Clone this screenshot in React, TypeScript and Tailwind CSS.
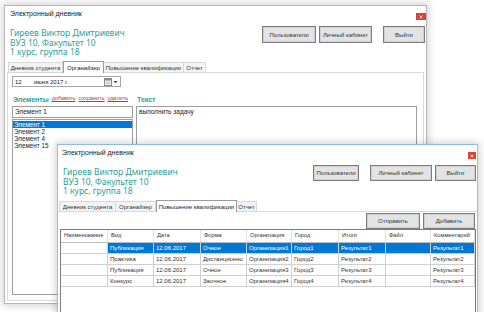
import React from 'react'

type Tab = { label: string; w: string; active?: boolean }

const names = ['Гиреев Виктор Дмитриевич', 'ВУЗ 10, Факультет 10', '1 курс, группа 18']

const cols = [
  { title: 'Наименование', w: 'w-[47px]' },
  { title: 'Вид', w: 'w-[46px]' },
  { title: 'Дата', w: 'w-[47px]' },
  { title: 'Форма', w: 'w-[46px]' },
  { title: 'Организация', w: 'w-[45px]' },
  { title: 'Город', w: 'w-[47px]' },
  { title: 'Итоги', w: 'w-[47px]' },
  { title: 'Файл', w: 'w-[45px]' },
  { title: 'Комментарий', w: 'w-[44px]' },
]

const rows = [
  ['', 'Публикация', '12.06.2017', 'Очное', 'Организация1', 'Город1', 'Результат1', '', 'Результат1'],
  ['', 'Практика', '12.06.2017', 'Дистанционно', 'Организация2', 'Город2', 'Результат2', '', 'Результат2'],
  ['', 'Публикация', '12.06.2017', 'Очное', 'Организация3', 'Город3', 'Результат3', '', 'Результат3'],
  ['', 'Конкурс', '12.06.2017', 'Заочное', 'Организация4', 'Город4', 'Результат4', '', 'Результат4'],
]

function Close({ className }: { className: string }) {
  return (
    <div className={`flex items-center justify-center bg-[#d8423b] ${className}`}>
      <svg width="4" height="4" viewBox="0 0 4 4">
        <path d="M0.5 0.5 L3.5 3.5 M3.5 0.5 L0.5 3.5" stroke="#fff" strokeWidth="0.8" />
      </svg>
    </div>
  )
}

function Btn({ className, children }: { className: string; children: React.ReactNode }) {
  return (
    <div
      className={`flex items-center justify-center whitespace-nowrap border border-[#7c7c7c] bg-[#e3e3e3] text-[6px] leading-none text-[#333] shadow-[inset_0_0_0_1px_#d0d0d0] ${className}`}
    >
      {children}
    </div>
  )
}

function Tabs({ tabs, className }: { tabs: Tab[]; className: string }) {
  return (
    <div className={`flex h-[12px] shrink-0 items-end ${className}`}>
      {tabs.map((t) =>
        t.active ? (
          <div
            key={t.label}
            className={`relative z-10 -mb-px flex h-[12px] items-center justify-center whitespace-nowrap border border-b-0 border-[#9a9a9a] bg-white text-[6px] leading-none text-[#222] ${t.w}`}
          >
            {t.label}
          </div>
        ) : (
          <div
            key={t.label}
            className={`flex h-[10px] items-center justify-center whitespace-nowrap border border-b-0 border-l-0 border-[#d9d9d9] bg-[#f3f3f3] text-[6px] leading-none text-[#333] first:border-l ${t.w}`}
          >
            {t.label}
          </div>
        )
      )}
    </div>
  )
}

function Header({ buttons }: { buttons: React.ReactNode }) {
  return (
    <div className="flex h-[37px] shrink-0 justify-between">
      <div className="pl-[5px] pt-[5px] font-['Noto_Sans',sans-serif] text-[8.5px] leading-[9.7px] text-[#2b9e9c]">
        {names.map((n) => (
          <div key={n}>{n}</div>
        ))}
      </div>
      {buttons}
    </div>
  )
}

function DatePicker() {
  return (
    <div className="flex h-[11px] w-[109px] items-center whitespace-nowrap border border-[#a6a6a6] bg-white text-[6px] leading-none text-[#222]">
      <span className="ml-[2px] w-[19px]">12</span>
      <span className="w-[16px]">июня</span>
      <span>2017 г.</span>
      <div className="ml-auto mr-[2px] flex items-center gap-[1px]">
        <svg width="8" height="8" viewBox="0 0 8 8">
          <rect x="0.5" y="0.5" width="7" height="7" fill="#f4f4f4" stroke="#8a8a8a" />
          <rect x="0.5" y="0.5" width="7" height="2" fill="#8a8a8a" />
          <path d="M2 4h4M2 5.5h4" stroke="#b0b0b0" strokeWidth="0.7" />
        </svg>
        <svg width="5" height="4" viewBox="0 0 5 4">
          <path d="M0.5 1 L4.5 1 L2.5 3.2 Z" fill="#444" />
        </svg>
      </div>
    </div>
  )
}

const windowFrame =
  'absolute flex flex-col bg-white border border-[#b8b8b8] border-t-[#8fbbe8] shadow-[0_0_7px_2px_rgba(0,0,0,0.16)]'

export default function App() {
  return (
    <div className="relative h-[312px] w-[484px] overflow-hidden bg-white font-['Liberation_Sans',Arial,sans-serif]">
      {/* Organizer window */}
      <div className={`${windowFrame} left-[4px] top-[5px] h-[299px] w-[423px]`}>
        <div className="flex h-[17px] shrink-0 items-start justify-between">
          <span className="ml-[5px] mt-[4px] text-[7px] leading-[8px] text-[#222]">Электронный дневник</span>
          <Close className="mt-[7px] h-[7px] w-[10px]" />
        </div>
        <Header
          buttons={
            <div className="flex pr-[1px] pt-[3px]">
              <Btn className="h-[17px] w-[54px]">Пользователи</Btn>
              <Btn className="ml-[3px] h-[17px] w-[53px]">Личный кабинет</Btn>
              <Btn className="ml-[11px] h-[17px] w-[42px]">Выйти</Btn>
            </div>
          }
        />
        <Tabs
          className="ml-[3px]"
          tabs={[
            { label: 'Дневник студента', w: 'w-[55px]' },
            { label: 'Органайзер', w: 'w-[41px]', active: true },
            { label: 'Повышение квалификации', w: 'w-[80px]' },
            { label: 'Отчет', w: 'w-[22px]' },
          ]}
        />
        <div className="mx-[2px] mb-[2px] flex flex-1 flex-col border border-[#d9d9d9] px-[4px] pb-[5px] pt-[3px]">
          <DatePicker />
          <div className="mt-[8px] flex flex-1 gap-[3px]">
            <div className="flex w-[121px] flex-col">
              <div className="flex h-[8px] items-center gap-[3px] whitespace-nowrap pl-[1px] leading-none">
                <span className="text-[7px] font-bold text-[#2b9e9c]">Элементы</span>
                <span className="text-[5.5px] text-[#c0392b] underline">добавить</span>
                <span className="text-[5.5px] text-[#c0392b] underline">сохранить</span>
                <span className="text-[5.5px] text-[#c0392b] underline">удалить</span>
              </div>
              <div className="mt-[3px] flex h-[12px] items-center border border-[#9e9e9e] pl-[2px] text-[6.5px] leading-none text-[#222]">
                Элемент 1
              </div>
              <div className="mt-[1px] flex-1 border border-[#9e9e9e] pt-[1px] text-[6.3px] leading-[7px] text-[#222]">
                <div className="bg-[#0078d7] pl-[1px] text-white">Элемент 1</div>
                <div className="pl-[1px]">Элемент 2</div>
                <div className="pl-[1px]">Элемент 4</div>
                <div className="pl-[1px]">Элемент 15</div>
              </div>
            </div>
            <div className="flex flex-1 flex-col pr-[2px]">
              <div className="flex h-[8px] items-center pl-[1px] text-[7px] font-bold leading-none text-[#2b9e9c]">
                Текст
              </div>
              <div className="mt-[3px] flex-1 border border-[#9e9e9e] pl-[2px] pt-[2px] text-[6.5px] leading-none text-[#222]">
                выполнить задачу
              </div>
            </div>
          </div>
        </div>
      </div>

      {/* Qualification window */}
      <div className={`${windowFrame} left-[57px] top-[144px] z-10 h-[200px] w-[421px]`}>
        <div className="flex h-[17px] shrink-0 items-start justify-between">
          <span className="ml-[4px] mt-[4px] text-[7px] leading-[8px] text-[#222]">Электронный дневник</span>
          <Close className="mr-[1px] mt-[7px] h-[7px] w-[8px]" />
        </div>
        <Header
          buttons={
            <div className="flex pr-[1px] pt-[3px]">
              <Btn className="h-[16px] w-[46px]">Пользователи</Btn>
              <Btn className="ml-[11px] h-[16px] w-[62px]">Личный кабинет</Btn>
              <Btn className="ml-[3px] h-[16px] w-[41px]">Выйти</Btn>
            </div>
          }
        />
        <Tabs
          className="ml-[1px]"
          tabs={[
            { label: 'Дневник студента', w: 'w-[57px]' },
            { label: 'Органайзер', w: 'w-[40px]' },
            { label: 'Повышение квалификации', w: 'w-[81px]', active: true },
            { label: 'Отчет', w: 'w-[20px]' },
          ]}
        />
        <div className="flex flex-1 flex-col border-t border-[#d9d9d9] pl-[2px]">
          <div className="mt-[1px] flex justify-end gap-[3px] pr-[2px]">
            <Btn className="h-[16px] w-[54px]">Отправить</Btn>
            <Btn className="h-[16px] w-[52px]">Добавить</Btn>
          </div>
          <div className="w-[416px] flex-1 border border-[#7a7a7a] bg-white text-[6px] leading-none">
            <div className="flex h-[13px] border-b border-[#bcbcbc]">
              {cols.map((c) => (
                <div
                  key={c.title}
                  className={`flex shrink-0 items-center overflow-hidden whitespace-nowrap border-r border-[#e2e2e2] pl-[3px] text-[5.7px] text-[#333] ${c.w}`}
                >
                  {c.title}
                </div>
              ))}
            </div>
            {rows.map((r, ri) => (
              <div key={ri} className="flex h-[11px] border-b border-[#cfcfcf]">
                {r.map((v, ci) => (
                  <div
                    key={ci}
                    className={`flex shrink-0 items-center overflow-hidden whitespace-nowrap border-r border-[#cfcfcf] pl-[2px] ${cols[ci].w} ${
                      ri === 0 && ci > 0 ? 'bg-[#0078d7] text-white' : 'text-[#333]'
                    }`}
                  >
                    {v}
                  </div>
                ))}
              </div>
            ))}
          </div>
        </div>
      </div>
    </div>
  )
}
